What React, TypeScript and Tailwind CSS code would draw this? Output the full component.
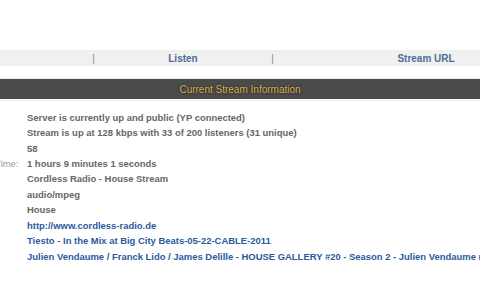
const ROWS: { label: string; value: string; link?: boolean }[] = [
    { label: 'Server Status:', value: 'Server is currently up and public (YP connected)' },
    { label: 'Stream Status:', value: 'Stream is up at 128 kbps with 33 of 200 listeners (31 unique)' },
    { label: 'Listener Peak:', value: '58' },
    { label: 'Average Listen Time:', value: '1 hours 9 minutes 1 seconds' },
    { label: 'Stream Title:', value: 'Cordless Radio - House Stream' },
    { label: 'Content Type:', value: 'audio/mpeg' },
    { label: 'Stream Genre:', value: 'House' },
    { label: 'Stream URL:', value: 'http://www.cordless-radio.de', link: true },
    { label: 'Current Song:', value: 'Tiesto - In the Mix at Big City Beats-05-22-CABLE-2011', link: true },
    { label: 'Next Song:', value: 'Julien Vendaume / Franck Lido / James Delille - HOUSE GALLERY #20 - Season 2 - Julien Vendaume remix', link: true },
];

export default function App() {
    return (
        <div className="w-[480px] h-[289px] overflow-hidden bg-white font-['Liberation_Sans',Arial,sans-serif]">
            <div className="h-[50px]" />
            <nav className="flex h-[16px] items-center bg-[#f0f0f0] text-[10px] font-bold text-[#4f6d96] whitespace-nowrap">
                <div className="w-[91px] shrink-0" />
                <span className="w-[5px] shrink-0 text-center font-normal text-[#888]">|</span>
                <a className="w-[174px] shrink-0 text-center">Listen</a>
                <span className="w-[5px] shrink-0 text-center font-normal text-[#888]">|</span>
                <a className="w-[302px] shrink-0 text-center">Stream URL</a>
            </nav>
            <div className="h-[13px] border-b border-[#ececec]" />
            <div className="flex h-[20px] items-center justify-center bg-[#4a4a4a] text-[10px] text-[#d6b04c] [text-shadow:0_0_2px_#1a1a1a]">
                Current Stream Information
            </div>
            <div className="h-[2px] border-b border-[#f0f0f0]" />
            <div className="mt-[9px] w-[640px] -ml-[70px] whitespace-nowrap">
                {ROWS.map((row) => (
                    <div key={row.label} className="flex h-[15.45px] items-center text-[9.45px]">
                        <span className="w-[97px] shrink-0 text-[#9a9a9a]">{row.label}</span>
                        <span className={row.link ? 'font-bold text-[#2c5a9c]' : 'font-bold text-[#666]'}>
                            {row.value}
                        </span>
                    </div>
                ))}
            </div>
        </div>
    );
}
